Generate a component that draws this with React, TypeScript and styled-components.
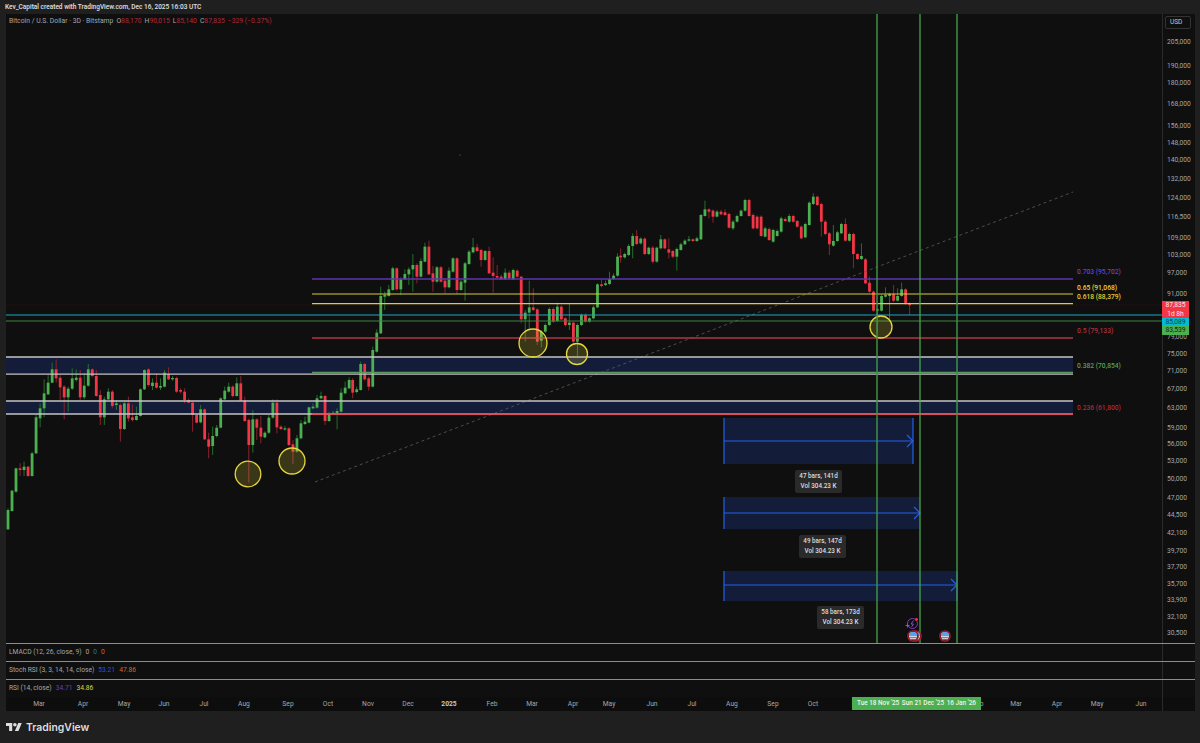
import React from "react";
import styled, { createGlobalStyle } from "styled-components";

const Global = createGlobalStyle`
  html, body { margin: 0; padding: 0; background: #1f1f1f; }
  body { font-family: "Roboto", "Liberation Sans", sans-serif; overflow: hidden; }
`;

type C = [number, number, number, number, number, number];

const seg5: C[] = [
  [510,568,505,570,1],[452,513,450,515,1],[385,455,383,458,1],[385,390,370,408,0],[380,390,365,408,1],[380,408,378,410,0],
  [340,408,335,410,1],[232,340,225,342,1],[205,235,190,262,1],[160,205,118,232,1],[128,163,105,165,1],[88,128,68,130,1],
  [88,115,58,128,0],[113,142,105,180,0],[140,172,135,238,0],[146,172,140,215,1],[115,146,85,150,1],[113,120,88,125,1],
  [113,172,90,180,0],[137,172,100,178,1],[88,137,72,140,1],[88,108,85,112,0],[108,168,90,170,0],[165,232,150,255,0],
  [178,232,170,255,1],[155,178,145,180,1],[155,198,150,205,0],[190,195,180,210,1],[195,267,190,305,0],[190,267,185,270,1],
  [190,235,170,245,0],[232,240,193,245,0],[228,240,200,242,1],[148,228,145,230,1],[90,148,88,150,1],[88,135,85,140,0],
  [128,138,115,150,1],[128,143,100,146,0],[138,143,115,150,1],[98,140,90,142,1],[102,118,82,120,0],[114,118,108,122,1],
  [114,155,110,158,0],[150,155,145,160,0],[155,180,145,190,0],[180,188,176,190,0],[188,225,185,275,0],[225,248,222,250,0],
  [208,247,195,250,1],[208,298,205,300,0],[298,320,278,355,0],[288,318,260,345,1],[263,288,255,292,1],[175,263,172,265,1],
  [152,178,140,180,1],[140,155,128,158,1],[140,168,136,172,0],[130,168,112,170,1],[130,182,108,185,0],[182,243,170,246,0],
  [240,315,236,428,0],[238,315,210,338,1],[238,263,235,300,0],[263,290,228,310,0],[278,292,274,295,1],[233,278,225,282,1],
  [188,233,178,236,1],[188,262,178,280,0],[260,267,256,270,0],[265,268,258,272,1],[265,315,262,318,0],[313,335,300,372,0],
  [295,335,285,338,1],[250,295,240,298,1],[245,252,230,255,1],[202,248,200,250,1],[200,205,190,208,1],[175,203,165,206,1],
  [168,175,155,178,1],[168,243,165,255,0],[222,243,215,246,1],[218,222,212,225,1],[213,220,205,268,1],[158,215,145,218,1],
  [143,160,125,162,1],[120,145,112,148,1],
];

const seg6: C[] = [
  [450,488,445,505,0],[478,486,470,490,1],[402,480,395,482,1],[402,448,398,452,0],[445,470,440,482,0],[360,470,350,472,1],
  [308,365,298,368,1],[198,310,170,312,1],[195,200,185,240,1],[178,198,165,200,1],[115,180,110,182,1],[115,178,112,182,0],
  [148,178,142,195,1],[132,148,118,150,1],[118,133,112,165,1],[105,118,72,185,1],[105,140,100,160,0],[93,140,85,142,1],
  [50,95,38,97,1],[50,133,32,135,0],[130,155,108,185,0],[112,155,108,158,1],[112,155,108,158,0],[152,172,145,190,0],
  [122,172,112,175,1],[85,125,82,128,1],[85,180,82,192,0],[155,180,150,182,1],[100,158,96,212,1],[65,102,60,105,1],
  [52,67,24,70,1],[52,63,42,66,0],[60,90,56,110,0],[63,90,60,92,1],[63,130,50,132,0],[128,138,82,188,0],
  [138,143,105,146,0],[140,148,134,150,0],[128,148,115,150,1],[128,145,122,150,0],[120,148,116,150,1],[122,140,118,143,0],
  [140,268,138,280,0],[248,268,240,335,1],[232,248,152,300,1],[232,240,175,244,0],[238,335,234,345,0],[305,332,300,352,1],
  [285,305,280,308,1],[237,285,232,288,1],[237,275,232,278,0],[230,273,218,276,1],[230,268,226,270,0],[265,285,262,290,0],
  [278,285,220,300,1],[278,335,275,345,0],[285,335,280,378,1],[255,285,250,288,1],[255,275,250,278,0],[265,275,262,278,1],
  [232,265,226,268,1],[163,232,160,234,1],[163,168,148,172,0],[160,165,152,168,1],[147,162,125,165,1],[137,147,130,150,1],
  [80,137,70,140,1],
];

const seg7: C[] = [
  [227,232,205,248,0],[222,232,218,236,1],[198,225,192,228,1],[168,198,160,235,1],[168,192,150,195,0],[176,190,172,194,1],
  [176,222,172,225,0],[203,222,200,225,1],[203,245,198,250,0],[203,245,200,248,1],[178,205,165,208,1],[178,205,175,208,0],
  [208,218,175,235,0],[213,230,210,234,0],[207,230,203,272,1],[193,210,188,212,1],[182,193,178,195,1],[178,182,168,185,1],
  [178,183,175,186,0],[175,183,170,186,1],[105,178,102,180,1],[88,108,62,110,1],[88,95,85,115,0],[92,110,88,128,0],
  [95,110,90,112,1],[95,103,90,106,0],[97,105,88,108,0],[102,143,98,146,0],[125,145,120,150,1],[108,125,104,128,1],
  [92,108,88,110,1],[60,92,56,95,1],[60,108,56,110,0],[105,145,100,148,0],[110,145,106,148,0],[110,168,106,170,0],
  [145,170,140,172,1],[147,180,142,183,0],[150,185,146,188,1],[153,168,148,170,1],[115,155,110,158,1],[117,123,112,126,0],
  [108,125,102,128,1],[108,125,104,128,0],[123,140,120,143,0],[140,175,136,178,0],[132,172,128,175,1],[68,135,64,137,1],
  [50,72,40,75,1],[50,75,47,78,0],[72,125,68,170,0],[125,162,120,166,0],[160,193,156,225,0],[183,197,135,200,1],
  [157,183,152,186,1],[132,160,128,162,1],[132,182,115,185,0],[162,182,158,185,1],[162,222,158,265,0],[222,237,220,240,0],
  [228,237,190,240,1],[238,310,234,312,0],[308,335,290,338,0],[335,392,332,395,0],[388,392,384,458,1],[348,392,344,395,1],
  [345,350,322,353,1],[342,348,338,418,1],[342,362,315,366,0],[348,362,325,365,1],[328,348,308,350,1],[328,372,325,375,0],
  [372,375,368,405,0],
];

const series = [
  { data: seg5, baseX: 0, baseY: 340, startX: 24 },
  { data: seg6, baseX: 350, baseY: 230, startX: 8 },
  { data: seg7, baseX: 620, baseY: 180, startX: 2 },
];

const candles = series.flatMap(({ data, baseX, baseY, startX }) =>
  data.map(([t, b, wt, wb, up], i) => ({
    x: baseX + (startX + 12.04 * i) / 3,
    top: baseY + t / 3,
    bottom: baseY + b / 3,
    wickTop: baseY + wt / 3,
    wickBottom: baseY + wb / 3,
    up: up === 1,
  }))
);

const prices: [string, number][] = [
  ["205,000", 42],["190,000", 66],["180,000", 83],["168,000", 104],["156,000", 126],["148,000", 143],["140,000", 160],
  ["132,000", 179],["124,000", 198],["116,500", 217],["109,000", 238],["103,000", 255],["97,000", 273],["91,000", 294],
  ["79,000", 337],["75,000", 354],["71,000", 371],["67,000", 389],["63,000", 408],["59,000", 428],["56,000", 444],
  ["53,000", 461],["50,000", 479],["47,000", 498],["44,500", 515],["42,100", 533],["39,700", 551],["37,700", 567],
  ["35,700", 584],["33,900", 600],["32,100", 617],["30,500", 633],
];

const months: [string, number, boolean?][] = [
  ["Mar", 39],["Apr", 83],["May", 124],["Jun", 164],["Jul", 204],["Aug", 244],["Sep", 288],["Oct", 328],["Nov", 368],
  ["Dec", 408],["2025", 449, true],["Feb", 492],["Mar", 532],["Apr", 573],["May", 609],["Jun", 652],["Jul", 692],
  ["Aug", 732],["Sep", 773],["Oct", 813],["Feb", 978],["Mar", 1016],["Apr", 1057],["May", 1097],["Jun", 1141],
];

const fibs: { text: string; y: number; color: string }[] = [
  { text: "0.703 (95,702)", y: 272, color: "#6a3fc0" },
  { text: "0.65 (91,068)", y: 288, color: "#e6d63c" },
  { text: "0.618 (88,379)", y: 297, color: "#e0d03a" },
  { text: "0.5 (79,133)", y: 331, color: "#b0303c" },
  { text: "0.382 (70,854)", y: 366, color: "#559f5a" },
  { text: "0.236 (61,800)", y: 408, color: "#a82a36" },
];

const measures = [
  { x1: 724, x2: 913, top: 418, bottom: 464, mid: 441, edge: true, a: "47 bars, 141d", lx: 795, ly: 470 },
  { x1: 724, x2: 920, top: 497, bottom: 529, mid: 513, edge: false, a: "49 bars, 147d", lx: 799, ly: 535 },
  { x1: 724, x2: 957, top: 571, bottom: 601, mid: 585, edge: true, a: "58 bars, 173d", lx: 817, ly: 606 },
];

const circles = [
  [248, 474, 12.8],[292, 461, 13],[533, 343, 14],[577, 354, 10.5],[881, 327, 11],
];

const Page = styled.div`
  width: 1200px;
  height: 743px;
  display: flex;
  flex-direction: column;
  background: #1f1f1f;
  overflow: hidden;
`;
const Header = styled.div`
  height: 14px;
  padding-left: 5px;
  display: flex;
  align-items: center;
  font-size: 6.5px;
  font-weight: 500;
  color: #e0e0e0;
  white-space: nowrap;
`;
const Frame = styled.div`
  width: 1189px;
  height: 697px;
  margin-left: 6px;
  display: flex;
  flex-direction: column;
  background: #0f0f0f;
`;
const MainRow = styled.div`
  height: 629px;
  display: grid;
  grid-template-columns: 1156px 1fr;
  border-bottom: 1px solid #8c8c8c;
`;
const ChartArea = styled.div`
  position: relative;
  overflow: hidden;
`;
const ChartSvg = styled.svg`
  display: block;
  width: 1156px;
  height: 629px;
`;
const Legend = styled.div`
  position: absolute;
  left: 3px;
  top: 3px;
  display: flex;
  gap: 3px;
  font-size: 6.8px;
  color: #a6a6a6;
  white-space: nowrap;
`;
const Val = styled.span<{ $c: string }>`
  color: ${(p) => p.$c};
`;
const FibLabel = styled.div.attrs<{ $y: number; $c: string }>((p) => ({
  style: { top: p.$y - 14 - 5, color: p.$c },
}))<{ $y: number; $c: string }>`
  position: absolute;
  left: 1071px;
  line-height: 10px;
  font-size: 6.7px;
  font-weight: 500;
  white-space: nowrap;
`;
const Tooltip = styled.div.attrs<{ $x: number; $y: number }>((p) => ({
  style: { left: p.$x - 6, top: p.$y - 14 },
}))<{ $x: number; $y: number }>`
  position: absolute;
  width: 47px;
  height: 23px;
  border-radius: 2px;
  background: #2a2a2a;
  color: #dcdcdc;
  display: flex;
  flex-direction: column;
  align-items: center;
  justify-content: center;
  gap: 1px;
  font-size: 6.3px;
  line-height: 9px;
  font-weight: 500;
  white-space: nowrap;
`;
const PriceAxis = styled.div`
  position: relative;
  border-left: 1px solid #2a2a2a;
  color: #a6a6a6;
  font-size: 6.7px;
`;
const PriceTick = styled.div.attrs<{ $y: number }>((p) => ({
  style: { top: p.$y - 14 - 5 },
}))<{ $y: number }>`
  position: absolute;
  left: 4px;
  line-height: 10px;
`;
const UsdButton = styled.div`
  position: absolute;
  left: 2px;
  top: 2px;
  width: 26px;
  height: 13px;
  border: 1px solid #333;
  border-radius: 2px;
  box-sizing: border-box;
  padding-left: 4px;
  line-height: 11px;
  font-size: 6.5px;
  color: #c8c8c8;
`;
const PriceTags = styled.div`
  position: absolute;
  left: -1px;
  top: 287px;
  width: 27px;
  display: flex;
  flex-direction: column;
  align-items: stretch;
  font-size: 6.7px;
  text-align: center;
`;
const Tag = styled.div<{ $bg: string; $h: number; $c: string }>`
  background: ${(p) => p.$bg};
  color: ${(p) => p.$c};
  height: ${(p) => p.$h}px;
  line-height: 8.5px;
`;
const PaneRow = styled.div`
  height: 17px;
  display: grid;
  grid-template-columns: 1156px 1fr;
  border-bottom: 1px solid #8c8c8c;
  &:nth-of-type(4) {
    border-bottom: none;
    height: 18px;
  }
`;
const PaneLegend = styled.div`
  display: flex;
  align-items: center;
  gap: 4px;
  padding-left: 3px;
  font-size: 6.7px;
  color: #a6a6a6;
  white-space: nowrap;
`;
const PaneAxis = styled.div`
  border-left: 1px solid #2a2a2a;
`;
const TimeRow = styled.div`
  height: 14px;
  display: grid;
  grid-template-columns: 1156px 1fr;
  background: #0d0d0d;
`;
const TimeAxis = styled.div`
  position: relative;
  font-size: 6.7px;
`;
const TimeTick = styled.span.attrs<{ $x: number }>((p) => ({
  style: { left: p.$x - 6 },
}))<{ $x: number; $strong?: boolean }>`
  position: absolute;
  top: 2px;
  line-height: 10px;
  transform: translateX(-50%);
  font-weight: ${(p) => (p.$strong ? 700 : 400)};
  color: ${(p) => (p.$strong ? "#c8c8c8" : "#a6a6a6")};
`;
const TimeTags = styled.div`
  position: absolute;
  left: 846px;
  top: 0;
  width: 129px;
  height: 13px;
  background: #4caf50;
  display: flex;
  justify-content: space-between;
  padding: 0 5px 0 5px;
  box-sizing: border-box;
  color: #f2f2f2;
  font-size: 6.4px;
  font-weight: 500;
  line-height: 13px;
  white-space: nowrap;
`;
const Footer = styled.div`
  flex: 1;
  display: flex;
  align-items: center;
  gap: 4px;
  padding-left: 6px;
`;
const LogoMark = styled.svg`
  display: block;
  width: 16px;
  height: 8px;
`;
const LogoText = styled.span`
  font-family: "Inter", "Liberation Sans", sans-serif;
  font-size: 10.4px;
  font-weight: 600;
  color: #dedede;
`;

const FlagIcon: React.FC<{ x: number; y: number }> = ({ x, y }) => (
  <g transform={`translate(${x} ${y})`}>
    <circle r="5.2" fill="#2a0f14" stroke="#a3202c" strokeWidth="1.3" />
    <clipPath id={`flag-${x}`}>
      <circle r="4.2" />
    </clipPath>
    <g clipPath={`url(#flag-${x})`}>
      <rect x="-4.2" y="-4.2" width="8.4" height="8.4" fill="#e8e8e8" />
      <rect x="-4.2" y="-4.2" width="8.4" height="4.4" fill="#5aa0ec" />
      <rect x="-4.2" y="1.2" width="8.4" height="1" fill="#d13a44" />
      <rect x="-4.2" y="3" width="8.4" height="1" fill="#d13a44" />
    </g>
  </g>
);

const Chart: React.FC = () => (
  <ChartSvg viewBox="6 14 1156 629">
    <rect x="6" y="357" width="1067" height="17" fill="#131d3a" />
    <rect x="6" y="401" width="1067" height="13" fill="#131d3a" />
    <circle cx="460" cy="155" r="0.6" fill="#3c8c44" />

    {measures.map((m) => (
      <rect key={m.a} x={m.x1} y={m.top} width={m.x2 - m.x1} height={m.bottom - m.top} fill="#131d3a" />
    ))}

    <line x1="6" x2="1162" y1="305" y2="305" stroke="#4a1a22" strokeWidth="0.5" strokeDasharray="1 1" />

    {candles.map((c, i) => (
      <g key={i}>
        <line x1={c.x} x2={c.x} y1={c.wickTop} y2={c.wickBottom} stroke={c.up ? "#226f2c" : "#8a2230"} strokeWidth="1" />
        <rect
          x={c.x - 1.4}
          y={c.top}
          width="2.8"
          height={Math.max(c.bottom - c.top, 1.2)}
          fill={c.up ? "#4caf50" : "#f23645"}
        />
      </g>
    ))}

    <line x1="315" y1="482" x2="1073" y2="192" stroke="#5c5c5c" strokeWidth="0.8" strokeDasharray="3 3" />

    <line x1="312" x2="1073" y1="279" y2="279" stroke="#5e35b1" strokeWidth="1.4" />
    <line x1="312" x2="1073" y1="294" y2="294" stroke="#dccc3a" strokeWidth="1.2" />
    <line x1="312" x2="1073" y1="303.7" y2="303.7" stroke="#dccc3a" strokeWidth="1.2" />
    <line x1="6" x2="1162" y1="315" y2="315" stroke="#22a7c2" strokeWidth="1.2" />
    <line x1="6" x2="1162" y1="321" y2="321" stroke="#3a8541" strokeWidth="1.2" />
    <line x1="312" x2="1073" y1="338" y2="338" stroke="#b53542" strokeWidth="1.3" />
    <line x1="6" x2="1073" y1="357" y2="357" stroke="#c4c4c4" strokeWidth="1.4" />
    <line x1="6" x2="1073" y1="374.2" y2="374.2" stroke="#c4c4c4" strokeWidth="1.3" />
    <line x1="312" x2="1073" y1="372.4" y2="372.4" stroke="#5c9a62" strokeWidth="1.5" />
    <line x1="6" x2="1073" y1="401" y2="401" stroke="#c4c4c4" strokeWidth="1.3" />
    <line x1="6" x2="1073" y1="414" y2="414" stroke="#c4c4c4" strokeWidth="1.3" />
    <line x1="312" x2="1073" y1="414" y2="414" stroke="#f23645" strokeWidth="1.4" />

    {circles.map(([cx, cy, r]) => (
      <circle key={cx} cx={cx} cy={cy} r={r} fill="rgba(230,215,60,0.2)" stroke="#e6d73c" strokeWidth="1.3" />
    ))}

    {measures.map((m) => (
      <g key={m.a} stroke="#2360e8" fill="none" strokeWidth="1.2">
        <line x1={m.x1} x2={m.x1} y1={m.top} y2={m.bottom} />
        {m.edge && <line x1={m.x2} x2={m.x2} y1={m.top} y2={m.bottom} />}
        <line x1={m.x1} x2={m.x2} y1={m.mid} y2={m.mid} />
        <path d={`M${m.x2 - 6} ${m.mid - 6}L${m.x2} ${m.mid}L${m.x2 - 6} ${m.mid + 6}`} />
      </g>
    ))}

    <line x1="877" x2="877" y1="14" y2="643" stroke="#3f9146" strokeWidth="1.5" />
    <line x1="920" x2="920" y1="14" y2="643" stroke="#4caf50" strokeWidth="1.2" />
    <line x1="957" x2="957" y1="14" y2="643" stroke="#3f9146" strokeWidth="1.5" />

    <g>
      <circle cx="912.5" cy="623.5" r="5" fill="none" stroke="#7b3db8" strokeWidth="1" />
      <path d="M913.5 620.5L911 624H913.5L911.5 627" fill="none" stroke="#8e44d0" strokeWidth="1" />
      <path d="M907.5 623.5V627.5M905.5 625.5H909.5" stroke="#8e44ff" strokeWidth="1" />
      <circle cx="916.5" cy="619.5" r="1.4" fill="#f23645" />
    </g>
    <FlagIcon x={916} y={636} />
    <FlagIcon x={913} y={636} />
    <FlagIcon x={945} y={636} />
  </ChartSvg>
);

export default function App() {
  return (
    <Page>
      <Global />
      <Header>Kev_Capital created with TradingView.com, Dec 16, 2025 16:03 UTC</Header>
      <Frame>
        <MainRow>
          <ChartArea>
            <Chart />
            <Legend>
              <span>Bitcoin / U.S. Dollar · 3D · Bitstamp</span>
              <span>O<Val $c="#b02a38">88,170</Val></span>
              <span>H<Val $c="#b02a38">90,015</Val></span>
              <span>L<Val $c="#b02a38">85,140</Val></span>
              <span>C<Val $c="#b02a38">87,835</Val></span>
              <Val $c="#b02a38">−329 (−0.37%)</Val>
            </Legend>
            {fibs.map((f) => (
              <FibLabel key={f.text} $y={f.y} $c={f.color}>{f.text}</FibLabel>
            ))}
            {measures.map((m) => (
              <Tooltip key={m.a} $x={m.lx} $y={m.ly}>
                <span>{m.a}</span>
                <span>Vol 304.23 K</span>
              </Tooltip>
            ))}
          </ChartArea>
          <PriceAxis>
            <UsdButton>USD</UsdButton>
            {prices.map(([label, y]) => (
              <PriceTick key={label} $y={y}>{label}</PriceTick>
            ))}
            <PriceTags>
              <Tag $bg="#f23645" $c="#fbe4e6" $h={17}>87,835<br />1d 8h</Tag>
              <Tag $bg="#00bcd4" $c="#0f3a44" $h={8}>85,089</Tag>
              <Tag $bg="#4caf50" $c="#0f2a12" $h={9}>83,539</Tag>
            </PriceTags>
          </PriceAxis>
        </MainRow>
        <PaneRow>
          <PaneLegend>
            <span>LMACD (12, 26, close, 9)</span>
            <Val $c="#c79aa0">0</Val>
            <Val $c="#1f6fc0">0</Val>
            <Val $c="#d9661f">0</Val>
          </PaneLegend>
          <PaneAxis />
        </PaneRow>
        <PaneRow>
          <PaneLegend>
            <span>Stoch RSI (3, 3, 14, 14, close)</span>
            <Val $c="#2356d8">53.21</Val>
            <Val $c="#d9661f">47.86</Val>
          </PaneLegend>
          <PaneAxis />
        </PaneRow>
        <PaneRow>
          <PaneLegend>
            <span>RSI (14, close)</span>
            <Val $c="#6a3fb0">34.71</Val>
            <Val $c="#e0d03a">34.86</Val>
          </PaneLegend>
          <PaneAxis />
        </PaneRow>
        <TimeRow>
          <TimeAxis>
            {months.map(([label, x, strong]) => (
              <TimeTick key={`${label}-${x}`} $x={x} $strong={strong}>{label}</TimeTick>
            ))}
            <TimeTags>
              <span>Tue 18 Nov '25</span>
              <span>Sun 21 Dec '25</span>
              <span>16 Jan '26</span>
            </TimeTags>
          </TimeAxis>
          <PaneAxis />
        </TimeRow>
      </Frame>
      <Footer>
        <LogoMark viewBox="0 4 36 18">
          <path fill="#dedede" d="M14 22H7V11H0V4h14v18zM28 22h-8l7.5-18h8L28 22z" />
          <circle cx="20" cy="8" r="4" fill="#dedede" />
        </LogoMark>
        <LogoText>TradingView</LogoText>
      </Footer>
    </Page>
  );
}
